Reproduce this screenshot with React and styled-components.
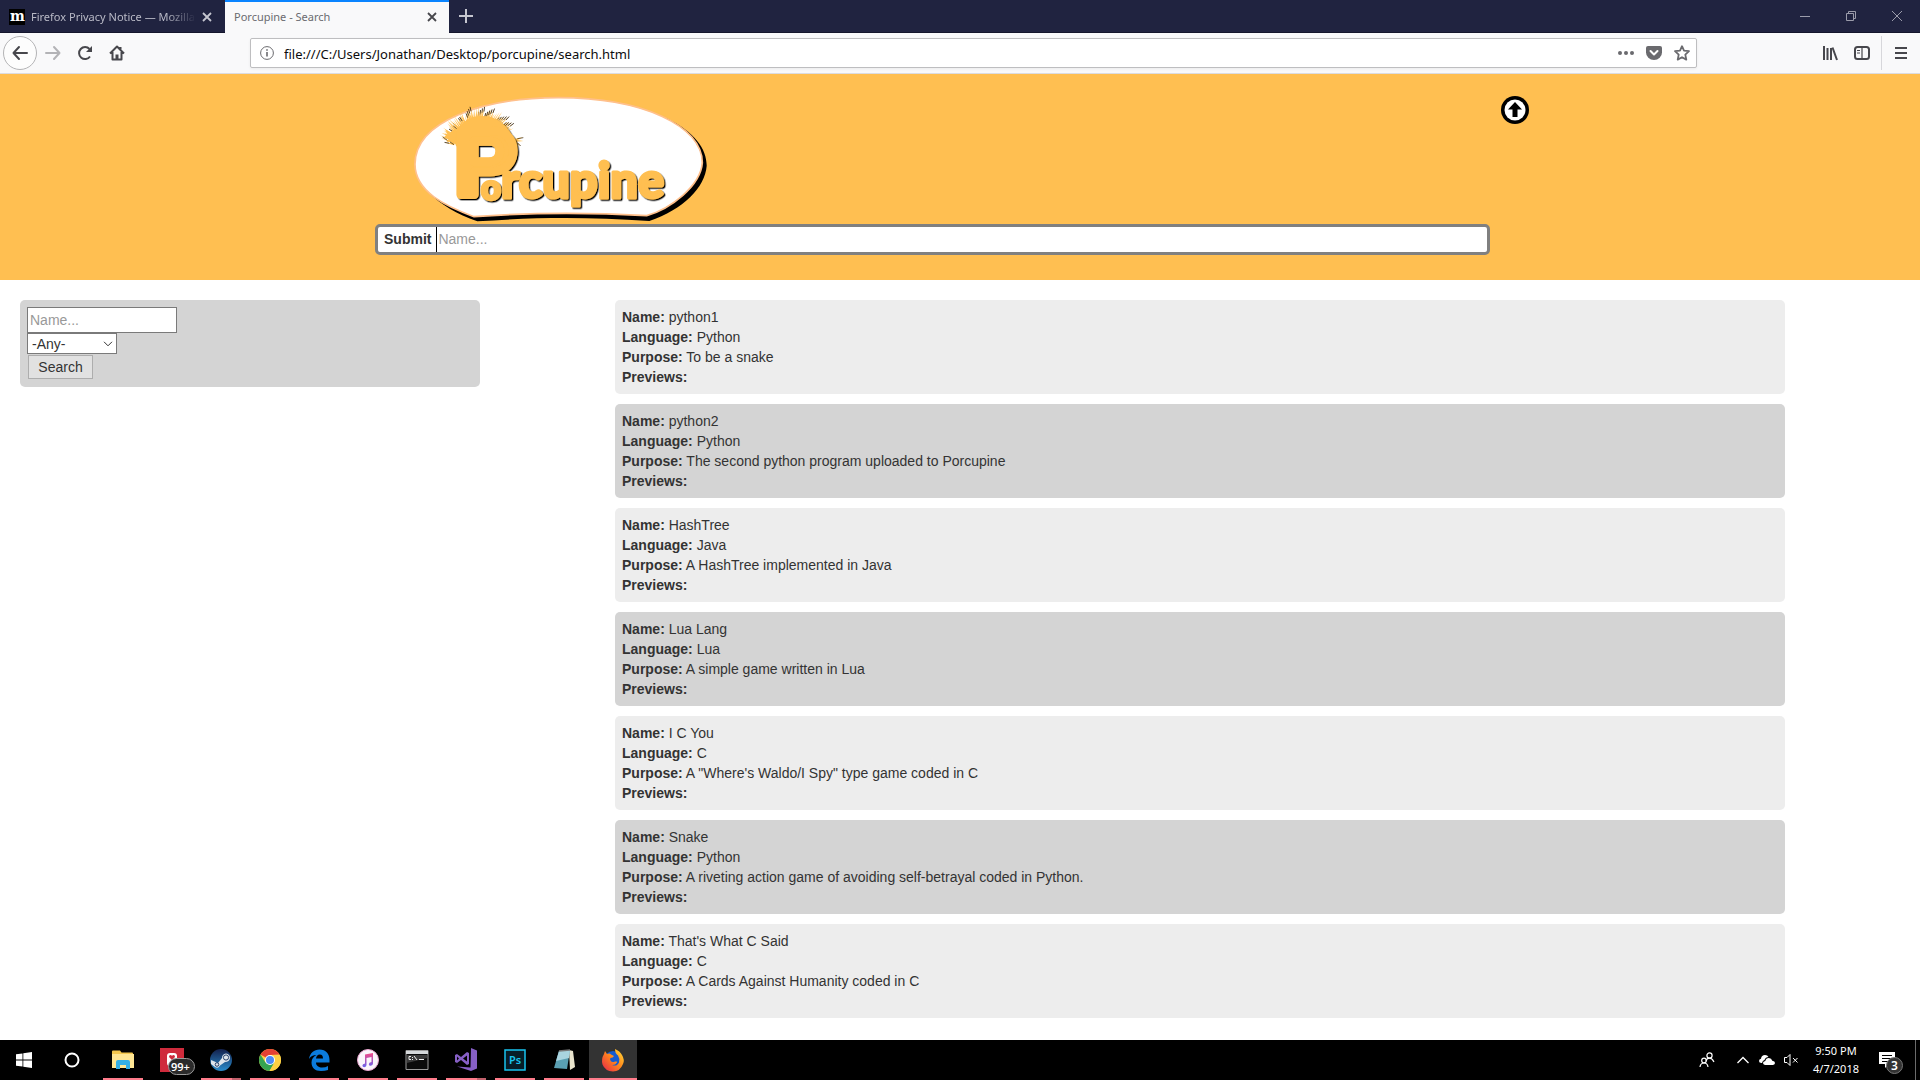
import React from 'react';
import styled, { createGlobalStyle } from 'styled-components';

const uiFont = '"Noto Sans", "Open Sans", sans-serif';
const pageFont = '"Liberation Sans", Arial, sans-serif';

const GlobalStyle = createGlobalStyle`
  *, *::before, *::after { box-sizing: border-box; }
  body { margin: 0; background: #fff; color: #333; font-family: ${pageFont}; font-size: 14px; line-height: 20px; }
  button, input, select { font: inherit; color: inherit; margin: 0; }
  button { padding: 0; border: 0; background: none; }
  svg { display: block; flex: none; }
`;

const Screen = styled.div`
  min-height: 100vh;
  display: flex;
  flex-direction: column;
`;

/* Browser window */
const TabBar = styled.div`
  display: flex;
  height: 33px;
  background: #202340;
  font-family: ${uiFont};
  font-size: 11px;
  box-shadow: inset 0 -1px #14162c;
`;
const Tab = styled.div`
  display: flex;
  align-items: center;
  gap: 6px;
  width: ${p => (p.$active ? 224 : 225)}px;
  padding: 0 ${p => (p.$active ? 12 : 13)}px 2px 9px;
  color: ${p => (p.$active ? '#6b6b70' : '#b9bac6')};
  background: ${p => (p.$active ? '#f9f9fa' : 'transparent')};
  border-top: 2px solid ${p => (p.$active ? '#0a84ff' : 'transparent')};
`;
const TabTitle = styled.span`
  flex: 1;
  min-width: 0;
  overflow: hidden;
  white-space: nowrap;
  mask-image: ${p => (p.$fade ? 'linear-gradient(to right, #000 82%, transparent)' : 'none')};
`;
const PlainButton = styled.button`
  display: flex;
  align-items: center;
  justify-content: center;
  width: ${p => p.$w || 32}px;
  height: ${p => p.$h || 32}px;
  color: ${p => p.$c || '#47474c'};
`;
const WindowControls = styled.div`
  display: flex;
  margin-left: auto;
`;
const Toolbar = styled.div`
  display: flex;
  align-items: center;
  height: 41px;
  padding: 0 3px;
  background: #f9f9fa;
  border-bottom: 1px solid #dcdce0;
`;
const BackButton = styled(PlainButton)`
  border: 1px solid #b4b4b6;
  border-radius: 50%;
  background: #fdfdfd;
`;
const AddressBar = styled.div`
  flex: 1;
  display: flex;
  align-items: center;
  height: 30px;
  margin: 0 117px;
  padding-left: 9px;
  border: 1px solid #bebec0;
  border-radius: 2px;
  background: #fff;
  color: #6a6a6e;
  box-shadow: 0 1px 3px rgba(0, 0, 0, 0.06);
`;
const AddressInput = styled.input`
  flex: 1;
  min-width: 0;
  padding: 1px 10px 0;
  border: 0;
  outline: 0;
  background: none;
  color: #0c0c0d;
  font-family: ${uiFont};
  font-size: 13px;
`;
const MenuDivider = styled.span`
  width: 1px;
  height: 34px;
  margin: 0 3px;
  background: #d7d7db;
`;

/* Porcupine page */
const Header = styled.header`
  padding: 20px 0 25px;
  background: #ffbf51;
`;
const Container = styled.div`
  width: 1170px;
  max-width: 100%;
  margin: 0 auto;
`;
const Brand = styled.div`
  display: flex;
  justify-content: space-between;
  align-items: flex-start;
  padding: 0 14px 0 25px;
`;
const HeaderForm = styled.form`
  display: flex;
  height: 31px;
  margin-right: 55px;
  border: 3px solid #808080;
  border-radius: 5px;
  background: #fff;
`;
const SubmitButton = styled.button`
  padding: 0 5px 2px 6px;
  border-right: 1px solid #000;
  font-weight: bold;
`;
const HeaderInput = styled.input`
  flex: 1;
  min-width: 0;
  padding: 0 1px 2px;
  border: 0;
  outline: 0;
  background: none;
  &::placeholder { color: #999; opacity: 1; }
`;
const Content = styled.main`
  flex: 1;
  display: grid;
  grid-template-columns: 460px minmax(0, 1fr);
  gap: 135px;
  align-items: start;
  padding: 20px 135px 20px 20px;
`;
const FilterForm = styled.form`
  display: flex;
  flex-direction: column;
  align-items: flex-start;
  padding: 7px 7px 8px;
  border-radius: 5px;
  background: #d4d4d4;
`;
const FilterInput = styled.input`
  width: 150px;
  height: 26px;
  padding: 1px 2px;
  border: 1px solid #7a7a7a;
  background: #fff;
  &::placeholder { color: #999; opacity: 1; }
`;
const SelectWrap = styled.div`
  position: relative;
  svg { position: absolute; right: 4px; top: 8px; pointer-events: none; }
`;
const FilterSelect = styled.select`
  display: block;
  appearance: none;
  width: 90px;
  height: 21px;
  padding: 0 4px;
  border: 1px solid #7a7a7a;
  border-radius: 0;
  background: #fff;
`;
const SearchButton = styled.button`
  width: 65px;
  height: 24px;
  margin: 1px;
  margin-bottom: 0;
  border: 1px solid #adadad;
  background: #e1e1e1;
`;
const Results = styled.section`
  display: grid;
  gap: 10px;
`;
const Card = styled.article`
  padding: 7px;
  border-radius: 5px;
  background: ${p => (p.$dark ? '#d4d4d4' : '#ededed')};
`;

/* Taskbar */
const Taskbar = styled.footer`
  display: flex;
  height: 40px;
  background: #000;
  color: #fff;
  font-family: ${uiFont};
  font-size: 11px;
`;
const Apps = styled.div`
  display: flex;
  gap: 1px;
  margin-left: 3px;
`;
const AppButton = styled.button`
  display: flex;
  align-items: center;
  justify-content: center;
  width: 48px;
  height: 40px;
  background:
    ${p => (p.$bar === 'none' ? '' : `linear-gradient(${p.$bar === 'stack' ? '90deg, #ff7c8b 31px, #c2616c 31px' : '#ff7c8b, #ff7c8b'}) center bottom / ${p.$current ? 48 : 40}px 2px no-repeat,`)}
    ${p => (p.$current ? 'linear-gradient(#333, #333)' : 'linear-gradient(#000, #000)')};
`;
const Tray = styled.div`
  display: flex;
  align-items: center;
  margin-left: auto;
`;
const Clock = styled.time`
  width: 66px;
  line-height: 18px;
  text-align: center;
`;
const ShowDesktop = styled(PlainButton)`
  border-left: 1px solid #6b6b6b;
`;

const Icon = ({ s = 16, w, h, vb, children, ...rest }) => (
  <svg width={w || s} height={h || s} viewBox={vb || `0 0 ${w || s} ${h || s}`} fill="none" stroke="currentColor" aria-hidden="true" {...rest}>
    {children}
  </svg>
);

const CloseIcon = () => <Icon s={10} strokeWidth="1.8"><path d="M1 1l8 8M9 1l-8 8" /></Icon>;

/* Quills fan out over the top of the P */
const quills = Array.from({ length: 74 }, (_, i) => {
  const a = ((190 + i * 1.85) * Math.PI) / 180;
  const inner = 78;
  const outer = 108 + ((i * 37) % 23);
  const cx = 240;
  const cy = 188;
  const bend = ((i * 13) % 9) / 60;
  const x = r => cx + r * Math.cos(a + bend);
  const y = r => cy + r * Math.sin(a + bend);
  return {
    d: `M${cx + inner * Math.cos(a - 0.04)} ${cy + inner * Math.sin(a - 0.04)} L${x(outer)} ${y(outer)} L${cx + inner * Math.cos(a + 0.04)} ${cy + inner * Math.sin(a + 0.04)}Z`,
    tip: `M${x(outer - 14)} ${y(outer - 14)} L${x(outer)} ${y(outer)}`,
    dark: i > 30 ? i % 2 === 0 : i % 5 === 0,
  };
});

const Logo = () => (
  <svg width="320" height="130" viewBox="0 24 960 390" role="img" aria-label="Porcupine">
    <defs>
      <filter id="letterShadow" x="-5%" y="-5%" width="115%" height="115%">
        <feDropShadow dx="4" dy="4" stdDeviation="0.6" floodColor="#000" />
      </filter>
    </defs>
    <path d="M798 96C885 138 921 190 920 240C915 305 850 370 748 405C560 392 400 394 232 406C170 385 122 355 88 322L200 340L760 300Z" fill="#000" />
    <path d="M45 235C45 105 250 35 475 35C730 35 907 120 907 230C902 300 812 368 740 389C560 379 390 380 222 392C140 362 45 318 45 235Z" fill="#fff" stroke="#ffc08c" strokeWidth="5" />
    {quills.map((q, i) => (
      <g key={i}>
        <path d={q.d} fill="#ffbf51" />
        {q.dark && <path d={q.tip} stroke="#2b1c08" strokeWidth="2.4" />}
      </g>
    ))}
    <path d="M125 142l18 3-8-15 17 9 14-12 14 56-22-14-18-2 6-8-16-3 8-8zM345 158l25-4-18 8 18 3-20 2 12 14-20-14z" fill="#ffbf51" />
    <path d="M128 153l14 10M352 158l18-3M352 170l10 10M150 168l12 8M160 120l10 8M178 128l8-7" stroke="#2b1c08" strokeWidth="2" />
    <g filter="url(#letterShadow)" fill="#ffbf51" stroke="#ffbf51" strokeLinejoin="round" fontWeight="bold">
      <path d="M168 180C155 145 185 92 240 90C295 88 335 125 345 178Z" stroke="none" />
      <text x="164" y="328" fontSize="277" strokeWidth="27" fontFamily="Liberation Sans, Arial, sans-serif">P</text>
      <text x="242" y="341" fontSize="106" strokeWidth="8" fontWeight="900" fontFamily="Lato, sans-serif">o</text>
      <text x="303" y="337" fontSize="146" strokeWidth="9" fontWeight="900" fontFamily="Lato, sans-serif">rcupine</text>
    </g>
  </svg>
);

const results = [
  ['python1', 'Python', 'To be a snake'],
  ['python2', 'Python', 'The second python program uploaded to Porcupine'],
  ['HashTree', 'Java', 'A HashTree implemented in Java'],
  ['Lua Lang', 'Lua', 'A simple game written in Lua'],
  ['I C You', 'C', 'A "Where\'s Waldo/I Spy" type game coded in C'],
  ['Snake', 'Python', 'A riveting action game of avoiding self-betrayal coded in Python.'],
  ["That's What C Said", 'C', 'A Cards Against Humanity coded in C'],
];

const ExplorerIcon = () => (
  <Icon s={24} stroke="none">
    <path d="M1 3.500q0-1 1-1h7l1.500 2H21q1 0 1 1V20H1z" fill="#f5c84f" />
    <path d="M1 6h22v14H1z" fill="#ffe694" />
    <path d="M5 14q0-2 2-2h10q2 0 2 2v7h-4v-4H9v4H5z" fill="#35b0e6" />
  </Icon>
);
const NewsIcon = () => (
  <Icon w={48} h={34} stroke="none">
    <path d="M12 5h24v24H12z" fill="#cf2b3c" />
    <rect x="19" y="10" width="10" height="13" rx="3" fill="#fff" />
    <path d="M24 17l-3-3q0-2 1.500-2 1 0 1.500 1 .5-1 1.500-1 1.500 0 1.500 2z" fill="#cf2b3c" />
    <rect x="20.500" y="15.500" width="26" height="16" rx="8" fill="#2b2b2b" stroke="#999" />
    <text x="23" y="28" fontSize="11" fontWeight="600" fill="#fff">99+</text>
  </Icon>
);
const SteamIcon = () => (
  <Icon s={22} stroke="none">
    <defs><linearGradient id="steam" x2="0" y2="1"><stop stopColor="#13204c" /><stop offset="1" stopColor="#2a8ccc" /></linearGradient></defs>
    <circle cx="11" cy="11" r="11" fill="url(#steam)" />
    <path d="M1 11l7 3 4-5q0-4 4-4.500 4 .500 4 4.500-.5 4-5 4l-5 3.500Q8 20 5 18L1 15z" fill="#dfe6ec" />
    <circle cx="16" cy="8.500" r="2.600" fill="none" stroke="#27406a" />
    <circle cx="7" cy="15.500" r="1.800" fill="none" stroke="#27406a" />
  </Icon>
);
const ChromeIcon = () => (
  <Icon s={22} stroke="none">
    <circle cx="11" cy="11" r="11" fill="#fdd043" />
    <path d="M11 11L1.500 5.500A11 11 0 0 1 20.500 5.500L11 6z" fill="#e34133" />
    <path d="M1.500 5.500A11 11 0 0 0 10.500 22L15.500 13.500 11 11 6.500 13.500z" fill="#35a452" />
    <path d="M11 6H20.800A11 11 0 0 1 10.500 22L15.500 13.500z" fill="#fdd043" />
    <circle cx="11" cy="11" r="5" fill="#fff" />
    <circle cx="11" cy="11" r="4" fill="#4c8bf5" />
  </Icon>
);
const EdgeIcon = () => (
  <Icon s={22} stroke="none">
    <path d="M1 10C2 4 6 .500 11.500.500 18 .500 21.500 5 21.500 11v2.500H8C8 17 11 18.500 14 18.500q3.500 0 6-1.500v4Q17 22 13 22C7 22 3.500 18.500 3.500 13.500 3.500 10 5.500 7.500 8.500 6 5 6 2.500 7.500 1 10zM8 9.500h7C15 7 14 5.500 11.800 5.500 9.500 5.500 8.300 7.500 8 9.500z" fill="#0b7bdc" />
  </Icon>
);
const ItunesIcon = () => (
  <Icon s={22} stroke="none">
    <defs><linearGradient id="note" x2="0" y2="1"><stop stopColor="#f24a86" /><stop offset="1" stopColor="#6a62ee" /></linearGradient></defs>
    <circle cx="11" cy="11" r="10.500" fill="#faf5fb" stroke="#e9a5cf" />
    <path d="M8 5.500l8-1.500v10.500q0 2-2.300 2.300-1.900 0-1.900-1.600 0-1.700 2.700-2.200V8L9.500 9v7q0 2-2.200 2.200-1.900 0-1.900-1.600Q5.400 15 8 14.500z" fill="url(#note)" />
  </Icon>
);
const ConsoleIcon = () => (
  <Icon w={24} h={20} stroke="none">
    <path d="M1 .5h22v19H1z" fill="#0b0b0b" stroke="#9a9a9a" />
    <path d="M1 1h22v3H1z" fill="#d5d8da" />
    <path d="M2 5h20v3L2 13z" fill="#3a3a3a" />
    <path d="M6 6.500H4v3h2M7.500 7v1M7.500 9v1M9 6l3 4M14 9.500h5" fill="none" stroke="#eee" />
  </Icon>
);
const VsIcon = () => (
  <Icon s={24} stroke="none">
    <path d="M17 0l6 2.500v18L17 23 3 18.500l13.500 1z" fill="#865fc5" />
    <path d="M1 7l2-1 4 3 6-5 2 1v11l-2 1-6-5-4 3-2-1zM3 8.500v4L5 10.500zM9 10.500L13 13.500v-6z" fill="#865fc5" fillRule="evenodd" />
  </Icon>
);
const PhotoshopIcon = () => (
  <Icon s={22} stroke="none">
    <path d="M1 1h20v20H1z" fill="#071d27" stroke="#18c4ef" strokeWidth="1.500" />
    <text x="5" y="15" fontSize="11" fontWeight="600" fill="#18c4ef">Ps</text>
  </Icon>
);
const NotepadIcon = () => (
  <Icon s={24} stroke="none">
    <path d="M17 2l4 1 2 16-5 3z" fill="#e9e4cc" />
    <path d="M7 3l11-1-3 19-13-1z" fill="#5a9fb2" />
    <path d="M7 3l11-1-1 8L4 13z" fill="#a9d4df" />
    <path d="M7 3l11-1" stroke="#777" strokeWidth="1.500" />
  </Icon>
);
const FirefoxIcon = () => (
  <Icon s={24} stroke="none">
    <defs><linearGradient id="fox" x1="1" x2="0" y2="1"><stop stopColor="#ffe03a" /><stop offset=".45" stopColor="#ff8a1c" /><stop offset="1" stopColor="#e6214c" /></linearGradient></defs>
    <circle cx="12" cy="12" r="9" fill="#145bd0" />
    <path d="M14 1q5 2 7 6 3 5 1 9-3 7.500-10 7.500Q4 23 1.500 16.500 0 11 3 6l1-3 2 3q3-1 4 .5l3 1.500q-1 2-3.500 2-1 1 0 2.500Q11 15 14 13.500q3-.5 2 1-2 3-5 2.500 5 2 7-2.500 1-4-1-7-3-2-3-6.500z" fill="url(#fox)" />
  </Icon>
);

const apps = [
  ['File Explorer', ExplorerIcon, 'full'],
  ['News', NewsIcon, 'none'],
  ['Steam', SteamIcon, 'stack'],
  ['Chrome', ChromeIcon, 'full'],
  ['Edge', EdgeIcon, 'full'],
  ['iTunes', ItunesIcon, 'full'],
  ['Command Prompt', ConsoleIcon, 'full'],
  ['Visual Studio', VsIcon, 'stack'],
  ['Photoshop', PhotoshopIcon, 'full'],
  ['Notepad', NotepadIcon, 'full'],
  ['Firefox', FirefoxIcon, 'full'],
];

export default function App() {
  return (
    <Screen>
      <GlobalStyle />
      <TabBar>
        <Tab>
          <Icon s={16} stroke="none">
            <path d="M0 0h16v16H0z" fill="#000" />
            <text x="1" y="12" fontSize="14" fontWeight="bold" fontFamily="DejaVu Serif, serif" fill="#fff">m</text>
          </Icon>
          <TabTitle $fade>Firefox Privacy Notice — Mozilla</TabTitle>
          <PlainButton $w={10} $h={24} $c="#c5c6d0" aria-label="Close tab"><CloseIcon /></PlainButton>
        </Tab>
        <Tab $active>
          <TabTitle>Porcupine - Search</TabTitle>
          <PlainButton $w={10} $h={24} aria-label="Close tab"><CloseIcon /></PlainButton>
        </Tab>
        <PlainButton $w={34} $c="#c5c6d0" aria-label="New tab">
          <Icon s={14} strokeWidth="2"><path d="M7 0v14M0 7h14" /></Icon>
        </PlainButton>
        <WindowControls>
          <PlainButton $w={46} $c="#9b9cab" aria-label="Minimize"><Icon s={10}><path d="M0 5.500h10" /></Icon></PlainButton>
          <PlainButton $w={46} $c="#9b9cab" aria-label="Restore"><Icon s={10}><path d="M.5 2.500h7v7h-7zM2.500 2.500v-2h7v7h-2" /></Icon></PlainButton>
          <PlainButton $w={46} $c="#9b9cab" aria-label="Close"><Icon s={10}><path d="M0 0l10 10M10 0L0 10" /></Icon></PlainButton>
        </WindowControls>
      </TabBar>
      <Toolbar>
        <BackButton $w={34} $h={34} aria-label="Back"><Icon strokeWidth="2" strokeLinecap="round" strokeLinejoin="round"><path d="M15 8H1.500M7 2L1.500 8 7 14" /></Icon></BackButton>
        <PlainButton $c="#b3b3b6" aria-label="Forward"><Icon strokeWidth="2" strokeLinecap="round" strokeLinejoin="round"><path d="M1 8h13.500M9 2l5.500 6L9 14" /></Icon></PlainButton>
        <PlainButton aria-label="Reload"><Icon strokeWidth="2"><path d="M13 11.500A6 6 0 1 1 12.500 4" /><path d="M15 1v6H9z" fill="currentColor" stroke="none" /></Icon></PlainButton>
        <PlainButton aria-label="Home"><Icon strokeWidth="2" strokeLinejoin="round"><path d="M1 8.500l7-7 7 7M3.500 7v7.500h9V7M11.500 2v3" /><path d="M6.500 9.500h3V15h-3z" fill="currentColor" stroke="none" /></Icon></PlainButton>
        <AddressBar>
          <Icon s={14}><circle cx="7" cy="7" r="6.400" /><path d="M7 6v4.500M7 3.200v1.600" strokeWidth="1.600" /></Icon>
          <AddressInput aria-label="Address" defaultValue="file:///C:/Users/Jonathan/Desktop/porcupine/search.html" />
          <PlainButton $w={28} $h={28} $c="#6a6a6e" aria-label="Page actions"><Icon stroke="none" fill="currentColor"><circle cx="2" cy="8" r="2" /><circle cx="8" cy="8" r="2" /><circle cx="14" cy="8" r="2" /></Icon></PlainButton>
          <PlainButton $w={28} $h={28} $c="#6a6a6e" aria-label="Save to Pocket"><Icon stroke="none"><path d="M2 1h12q2 0 2 2v4.500a8 7.500 0 0 1-16 0V3q0-2 2-2z" fill="currentColor" /><path d="M4.500 6L8 9.500 11.500 6" stroke="#fff" strokeWidth="2" strokeLinecap="round" strokeLinejoin="round" /></Icon></PlainButton>
          <PlainButton $w={28} $h={28} $c="#6a6a6e" aria-label="Bookmark"><Icon strokeWidth="1.800" strokeLinejoin="round"><path d="M8 1.200l2 4.500 5 .5-3.700 3.400 1 5L8 12.200l-4.300 2.400 1-5L1 6.200l5-.5z" /></Icon></PlainButton>
        </AddressBar>
        <PlainButton aria-label="Library"><Icon strokeWidth="2"><path d="M2 1v14M5.500 3v12M9 3v12M10.500 2.500L15 15" /></Icon></PlainButton>
        <PlainButton aria-label="Sidebars"><Icon strokeWidth="2"><rect x="1" y="2" width="14" height="12" rx="2.500" /><path d="M8 2v12M3 5.500h3M3 8h3" strokeWidth="1.200" /></Icon></PlainButton>
        <MenuDivider />
        <PlainButton aria-label="Menu"><Icon strokeWidth="2"><path d="M2 3h12M2 8h12M2 13h12" /></Icon></PlainButton>
      </Toolbar>

      <Header>
        <Container>
          <Brand>
            <Logo />
            <PlainButton aria-label="Upload">
              <Icon s={28} stroke="none"><circle cx="14" cy="14" r="14" fill="#000" /><circle cx="14" cy="14" r="10.500" fill="#fff" /><path d="M14 6l7 7.500h-4.500V21h-5v-7.500H7z" fill="#000" /></Icon>
            </PlainButton>
          </Brand>
          <HeaderForm onSubmit={e => e.preventDefault()}>
            <SubmitButton>Submit</SubmitButton>
            <HeaderInput aria-label="Name" placeholder="Name..." />
          </HeaderForm>
        </Container>
      </Header>
      <Content>
        <FilterForm onSubmit={e => e.preventDefault()}>
          <FilterInput aria-label="Name" placeholder="Name..." />
          <SelectWrap>
            <FilterSelect aria-label="Language">
              <option>-Any-</option>
            </FilterSelect>
            <Icon w={10} h={6}><path d="M1 .8l4 4 4-4" /></Icon>
          </SelectWrap>
          <SearchButton>Search</SearchButton>
        </FilterForm>
        <Results>
          {results.map(([name, language, purpose], i) => (
            <Card key={name} $dark={i % 2 === 1}>
              <div><b>Name:</b> {name}</div>
              <div><b>Language:</b> {language}</div>
              <div><b>Purpose:</b> {purpose}</div>
              <div><b>Previews:</b></div>
            </Card>
          ))}
        </Results>
      </Content>

      <Taskbar>
        <AppButton $bar="none" aria-label="Start"><Icon stroke="none"><path d="M0 2.300l6.500-.9v6.200H0zM7.300 1.300L16 0v7.600H7.300zM0 8.400h6.500v6.200L0 13.700zM7.300 8.400H16V16l-8.700-1.300z" fill="#fff" /></Icon></AppButton>
        <AppButton $bar="none" aria-label="Cortana"><Icon strokeWidth="2" stroke="#fff"><circle cx="8" cy="8" r="6.500" /></Icon></AppButton>
        <Apps>
          {apps.map(([name, Glyph, bar]) => (
            <AppButton key={name} $bar={bar} $current={name === 'Firefox'} aria-label={name}><Glyph /></AppButton>
          ))}
        </Apps>
        <Tray>
          <PlainButton $w={48} $c="#fff" aria-label="People">
            <Icon strokeWidth="1.200"><circle cx="10.500" cy="3.500" r="2.600" /><path d="M7 9q1-2.800 3.500-2.800T15 10" /><circle cx="5" cy="8.500" r="2.300" /><path d="M1 15q.5-4 4-4t4 4" /></Icon>
          </PlainButton>
          <PlainButton $w={24} $c="#fff" aria-label="Hidden icons"><Icon w={12} h={8} strokeWidth="1.300"><path d="M.5 7L6 1.500 11.500 7" /></Icon></PlainButton>
          <PlainButton $w={24} $c="#fff" aria-label="OneDrive"><Icon stroke="none"><path d="M2.500 11Q0 11 0 9q0-2 2-2.300Q2.500 3 6 3q2.500 0 3.500 2-3 0-4 3-2 .5-2.500 3z" fill="#fff" /><path d="M6 13q-2-.3-2-2t2.300-2Q7 6 9.800 6q2.700 0 3.500 2.700Q16 9 16 11q0 1.700-2 2z" fill="#fff" /></Icon></PlainButton>
          <PlainButton $w={24} $c="#fff" aria-label="Muted"><Icon><path d="M1.500 5.500v5h2.500l3 3v-11l-3 3zM10 6l4.500 4.500M14.500 6L10 10.500" /></Icon></PlainButton>
          <Clock>9:50 PM<br />4/7/2018</Clock>
          <PlainButton $w={46} $h={40} $c="#fff" aria-label="Notifications">
            <Icon w={28} h={28} stroke="none">
              <path d="M1 6h16v12h-6l-4 4v-4H1z" fill="#fff" />
              <path d="M4 9.500h10M4 12.500h10M4 15.500h6" stroke="#000" />
              <circle cx="16.500" cy="19.500" r="8" fill="#333" stroke="#777" />
              <text x="16.500" y="24" fontSize="12" textAnchor="middle" fontWeight="600" fill="#fff">3</text>
            </Icon>
          </PlainButton>
          <ShowDesktop $w={5} $h={40} aria-label="Show desktop" />
        </Tray>
      </Taskbar>
    </Screen>
  );
}
